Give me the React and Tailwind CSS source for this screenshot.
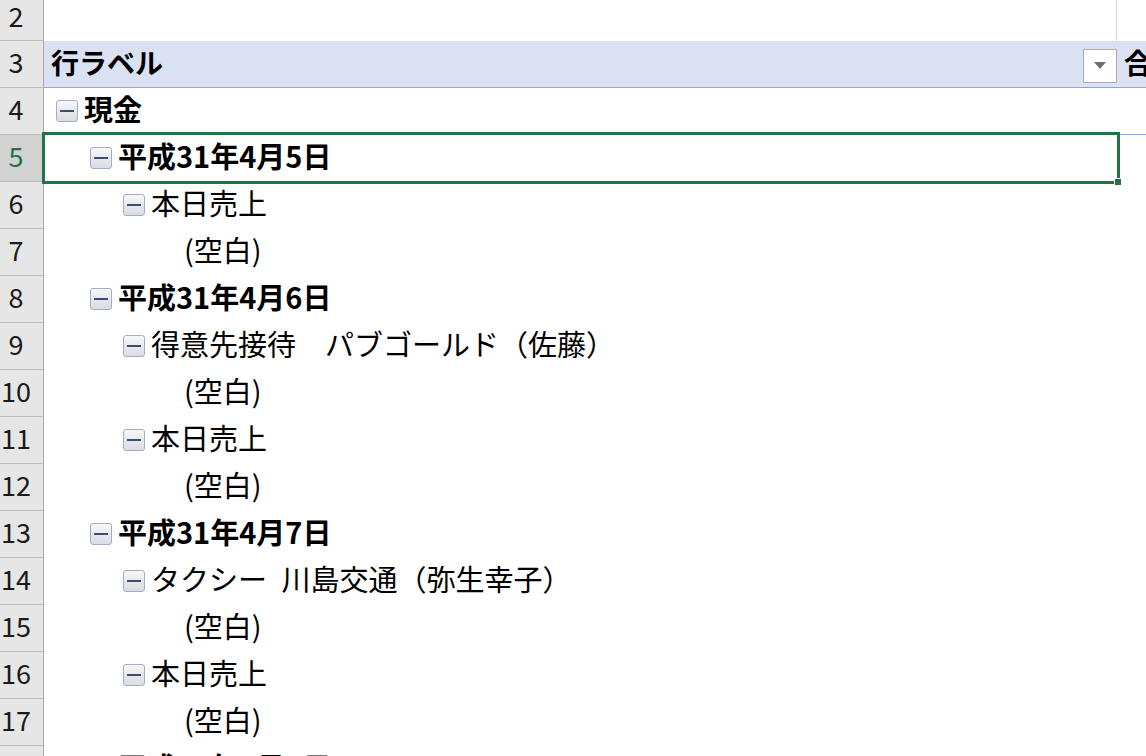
import React from 'react';

const rows = [
  { n: 4, level: 0, text: '現金', bold: true, box: true, line: true },
  { n: 5, level: 1, text: '平成31年4月5日', bold: true, box: true, selected: true },
  { n: 6, level: 2, text: '本日売上', box: true },
  { n: 7, level: 3, text: '(空白)' },
  { n: 8, level: 1, text: '平成31年4月6日', bold: true, box: true },
  { n: 9, level: 2, text: '得意先接待　パブゴールド（佐藤）', box: true },
  { n: 10, level: 3, text: '(空白)' },
  { n: 11, level: 2, text: '本日売上', box: true },
  { n: 12, level: 3, text: '(空白)' },
  { n: 13, level: 1, text: '平成31年4月7日', bold: true, box: true },
  { n: 14, level: 2, text: 'タクシー\u2002川島交通（弥生幸子）', box: true },
  { n: 15, level: 3, text: '(空白)' },
  { n: 16, level: 2, text: '本日売上', box: true },
  { n: 17, level: 3, text: '(空白)' },
  { n: 18, level: 1, text: '平成31年4月8日', bold: true, box: true },
];

const indent = ['pl-[12px]', 'pl-[46px]', 'pl-[79px]', 'pl-[112px]'];

const font = { fontFamily: '"Noto Sans CJK JP", "Noto Sans", sans-serif' };

const CollapseBox = () => (
  <span className="w-[22px] h-[22px] shrink-0 rounded-[3px] border border-[#a3aec4] bg-gradient-to-b from-[#f7f7f8] to-[#d9dce2] flex items-center justify-center">
    <span className="w-[14px] h-[2px] bg-[#3b4c74]" />
  </span>
);

const RowHead = ({ n, selected, h = 'h-[47px]', nudge = 'mb-[5px]' }) => (
  <div
    className={`w-[44px] shrink-0 ${h} border-r border-r-[#a8a8a8] border-b border-b-[#bdbdbd] flex items-center ${selected ? 'bg-[#d2d2d2] text-[#217346]' : 'bg-[#e6e6e6] text-[#1a1a1a]'}`}
  >
    <span className={`w-[32px] ${nudge} text-center text-[27px] leading-none whitespace-nowrap`}>{n}</span>
  </div>
);

const PivotRow = ({ row }) => (
  <div className="flex h-[47px]">
    <RowHead n={row.n} selected={row.selected} />
    <div className={`relative flex-1 flex items-center ${indent[row.level]} ${row.line ? 'border-b border-[#8ea9db]' : 'border-b border-transparent'}`}>
      {row.box ? <CollapseBox /> : <span className="w-[22px] shrink-0" />}
      <span className={`ml-[6px] mb-[5px] text-[29px] leading-none whitespace-nowrap text-black ${row.bold ? 'font-bold' : ''}`}>
        {row.text}
      </span>
      {row.selected && (
        <div className="absolute left-[-2px] top-[-3px] w-[1078px] h-[52px] border-[3px] border-[#217346] pointer-events-none">
          <div className="absolute right-[-5px] bottom-[-5px] w-[8px] h-[8px] bg-[#217346] border border-white" />
        </div>
      )}
    </div>
  </div>
);

export default function App() {
  return (
    <div className="w-[1146px] h-[756px] overflow-hidden bg-white" style={font}>
      <div className="flex h-[41px]">
        <RowHead n={2} h="h-[41px]" nudge="mb-[10px]" />
        <div className="w-[1073px] border-r border-[#d4d4d4]" />
        <div className="flex-1" />
      </div>

      <div className="flex h-[47px]">
        <RowHead n={3} />
        <div className="flex-1 flex bg-[#d9e1f2] border-b border-[#8ea9db]">
          <div className="w-[1076px] flex items-center justify-between pl-[7px] pr-[3px]">
            <span className="mb-[5px] text-[28px] font-bold leading-none text-black">行ラベル</span>
            <div className="w-[34px] h-[34px] mt-[3px] bg-white border border-[#ababab] flex items-center justify-center">
              <svg width="12" height="7" viewBox="0 0 12 7">
                <path d="M0 0 L12 0 L6 7 Z" fill="#6e6e6e" />
              </svg>
            </div>
          </div>
          <div className="flex-1 overflow-hidden flex items-center pl-[4px]">
            <span className="mb-[5px] text-[28px] font-bold leading-none whitespace-nowrap text-black">合計 / 金額</span>
          </div>
        </div>
      </div>

      {rows.map((row) => (
        <PivotRow key={row.n} row={row} />
      ))}
    </div>
  );
}
